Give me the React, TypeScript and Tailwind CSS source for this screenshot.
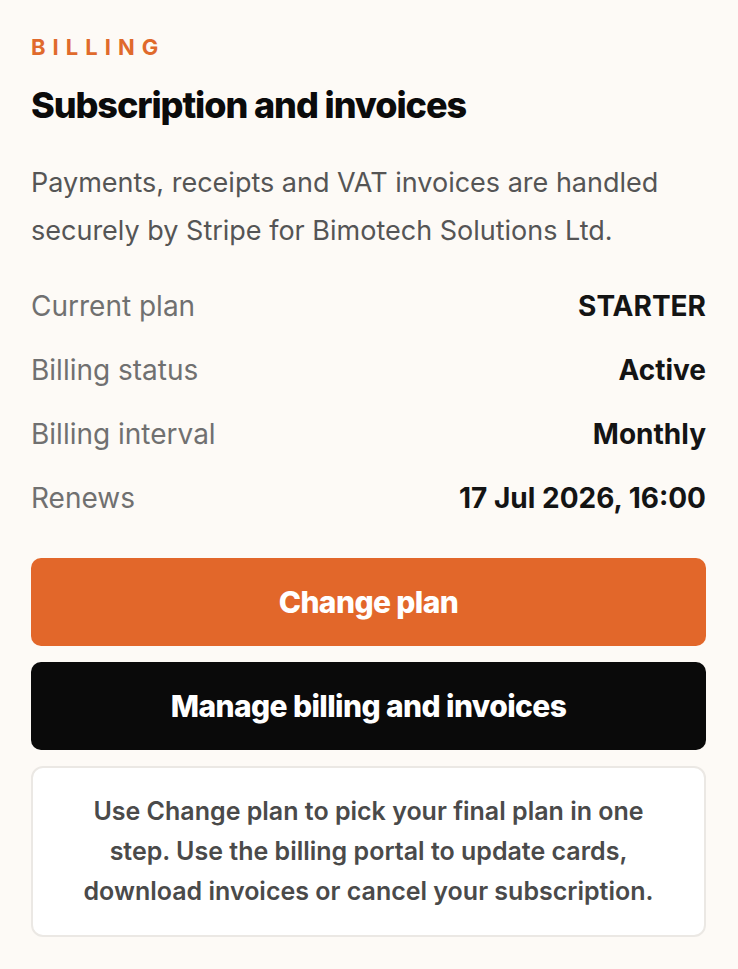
export default function App() {
  const rows = [
    { label: "Current plan", value: "STARTER" },
    { label: "Billing status", value: "Active" },
    { label: "Billing interval", value: "Monthly" },
    { label: "Renews", value: "17 Jul 2026, 16:00" },
  ];

  return (
    <div className="min-h-screen bg-[#fdfaf6] font-['Inter',sans-serif]">
      <div className="pl-[31px] pr-8 pt-[33px] pb-8">
        <p className="text-[22px] font-bold leading-[28px] tracking-[0.32em] text-[#e06a2c]">BILLING</p>
        <h1 className="mt-[22px] text-[36px] font-extrabold leading-[44px] tracking-[-0.03em] text-[#0b0b0b]">
          Subscription and invoices
        </h1>

        <p className="mt-8 text-[27px] leading-[48px] text-[#555555]">
          Payments, receipts and VAT invoices are handled securely by Stripe for Bimotech Solutions Ltd.
        </p>

        <div className="mt-[19px] flex flex-col">
          {rows.map((r) => (
            <div key={r.label} className="flex h-16 items-center justify-between">
              <span className="text-[28px] text-[#707070]">{r.label}</span>
              <span className="text-[28px] font-bold text-[#141414]">{r.value}</span>
            </div>
          ))}
        </div>

        <div className="mt-7 flex flex-col gap-4">
          <button className="h-[88px] w-full rounded-[10px] bg-[#e2672a] text-[30px] font-extrabold tracking-[-0.02em] text-white">
            Change plan
          </button>
          <button className="h-[88px] w-full rounded-[10px] bg-[#0a0a0a] text-[30px] font-extrabold tracking-[-0.02em] text-white">
            Manage billing and invoices
          </button>
        </div>

        <div className="mt-4 rounded-xl border-2 border-[#ebe8e4] bg-white px-[45px] pt-[23px] pb-[24px] text-center">
          <p className="text-[25px] font-semibold leading-10 text-[#4a4a4a]">
            Use Change plan to pick your final plan in one step. Use the billing portal to update cards, download invoices or cancel your subscription.
          </p>
        </div>
      </div>
    </div>
  );
}
